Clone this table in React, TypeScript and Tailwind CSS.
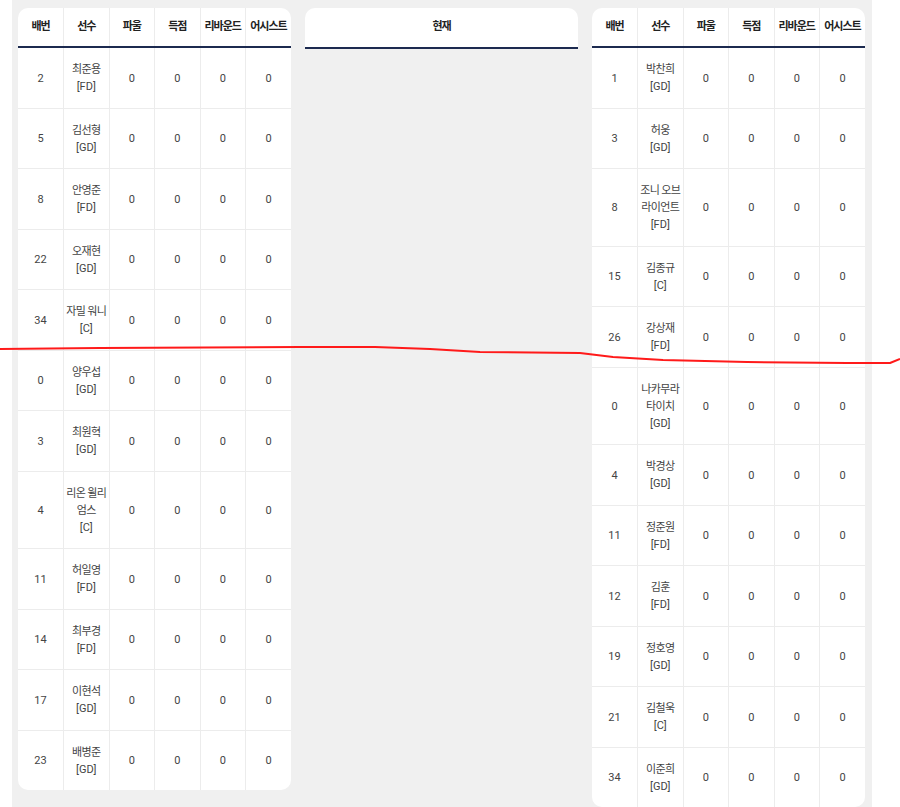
const font = { fontFamily: 'Roboto, "Noto Sans CJK KR", sans-serif' };

type Player = { no: number; name: string[]; pos: string };

const home: Player[] = [
  { no: 2, name: ['최준용'], pos: 'FD' },
  { no: 5, name: ['김선형'], pos: 'GD' },
  { no: 8, name: ['안영준'], pos: 'FD' },
  { no: 22, name: ['오재현'], pos: 'GD' },
  { no: 34, name: ['자밀 워니'], pos: 'C' },
  { no: 0, name: ['양우섭'], pos: 'GD' },
  { no: 3, name: ['최원혁'], pos: 'GD' },
  { no: 4, name: ['리온 윌리', '엄스'], pos: 'C' },
  { no: 11, name: ['허일영'], pos: 'FD' },
  { no: 14, name: ['최부경'], pos: 'FD' },
  { no: 17, name: ['이현석'], pos: 'GD' },
  { no: 23, name: ['배병준'], pos: 'GD' },
];

const away: Player[] = [
  { no: 1, name: ['박찬희'], pos: 'GD' },
  { no: 3, name: ['허웅'], pos: 'GD' },
  { no: 8, name: ['조니 오브', '라이언트'], pos: 'FD' },
  { no: 15, name: ['김종규'], pos: 'C' },
  { no: 26, name: ['강상재'], pos: 'FD' },
  { no: 0, name: ['나카무라', '타이치'], pos: 'GD' },
  { no: 4, name: ['박경상'], pos: 'GD' },
  { no: 11, name: ['정준원'], pos: 'FD' },
  { no: 12, name: ['김훈'], pos: 'FD' },
  { no: 19, name: ['정호영'], pos: 'GD' },
  { no: 21, name: ['김철욱'], pos: 'C' },
  { no: 34, name: ['이준희'], pos: 'GD' },
];

const headers = ['배번', '선수', '파울', '득점', '리바운드', '어시스트'];

function RosterTable({ players }: { players: Player[] }) {
  return (
    <div className="w-[273px] shrink-0 self-start bg-white rounded-[10px] overflow-hidden">
      <table className="w-full table-fixed border-collapse text-center">
        <thead>
          <tr className="h-[39px] border-b-2 border-[#1c2a4f]">
            {headers.map((h, i) => (
              <th
                key={h}
                className={`p-0 text-[11px] font-bold text-[#222] tracking-[-1px] whitespace-nowrap ${i < 5 ? 'border-r border-[#ececec]' : ''}`}
              >
                {h}
              </th>
            ))}
          </tr>
        </thead>
        <tbody className="text-[11px] leading-[17px] text-[#444]">
          {players.map((p, r) => (
            <tr key={r} className={r < players.length - 1 ? 'border-b border-[#ececec]' : ''}>
              <td className="pt-[13px] pb-[12.5px] border-r border-[#ececec]">{p.no}</td>
              <td className="pt-[13px] pb-[12.5px] border-r border-[#ececec]">
                {p.name.map((n) => (
                  <div key={n} className="whitespace-nowrap tracking-[-0.6px]">{n}</div>
                ))}
                <div>[{p.pos}]</div>
              </td>
              <td className="pt-[13px] pb-[12.5px] border-r border-[#ececec]">0</td>
              <td className="pt-[13px] pb-[12.5px] border-r border-[#ececec]">0</td>
              <td className="pt-[13px] pb-[12.5px] border-r border-[#ececec]">0</td>
              <td className="pt-[13px] pb-[12.5px]">0</td>
            </tr>
          ))}
        </tbody>
      </table>
    </div>
  );
}

export default function App() {
  return (
    <div className="relative bg-white min-h-[807px]" style={font}>
      <div className="ml-[12px] w-[860px] min-h-[807px] bg-[#f0f0f0] pt-[8px] pl-[6px] pr-[7px] flex gap-[14px] items-start">
        <RosterTable players={home} />
        <div className="w-[273px] shrink-0 h-[41px] bg-white rounded-t-[10px] border-b-2 border-[#1c2a4f] flex items-center justify-center text-[11px] font-bold text-[#222] tracking-[-1px]">
          현재
        </div>
        <RosterTable players={away} />
      </div>
      <svg className="absolute left-0 top-0 pointer-events-none" width="900" height="807" viewBox="0 0 900 807">
        <path
          d="M0 349 L100 348 L300 347 L375 347 L430 349 L480 352 L580 353 L613 357 L663 360 L747 362 L847 363 L890 363 L900 359"
          fill="none"
          stroke="#ff1a1a"
          strokeWidth="2"
          strokeLinejoin="round"
        />
      </svg>
    </div>
  );
}
